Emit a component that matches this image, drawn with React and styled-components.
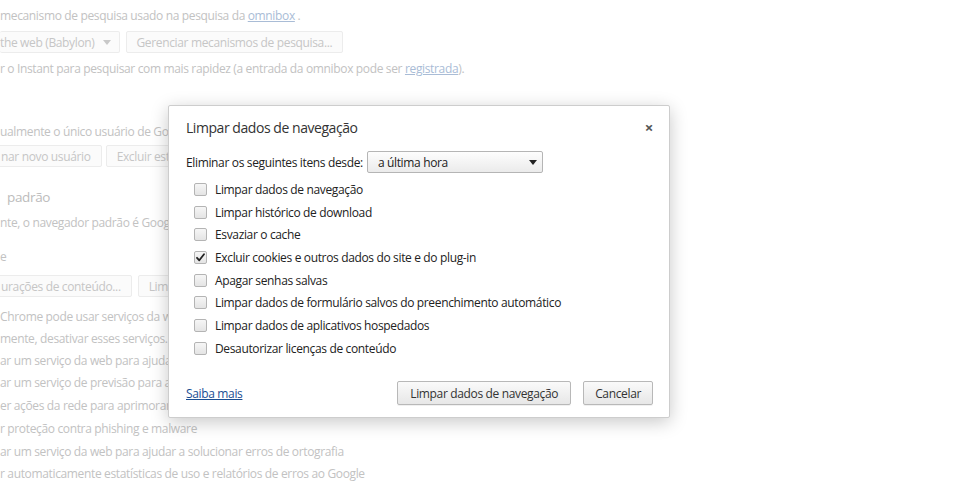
import React from "react";
import styled, { createGlobalStyle } from "styled-components";

const Global = createGlobalStyle`
  html, body { margin: 0; padding: 0; background: #fff; }
  body { font-family: "Open Sans", "Noto Sans", sans-serif; letter-spacing: -0.35px; }
`;

const Page = styled.div`
  position: relative;
  width: 956px;
  height: 500px;
  overflow: hidden;
  background: #fff;
`;

const Settings = styled.div`
  padding-top: 4px;
  color: #c2c2c2;
  font-size: 12px;
`;

const Line = styled.div`
  display: flex;
  align-items: center;
  gap: ${(p) => p.$gap ?? 6}px;
  height: 22px;
  margin-top: ${(p) => p.$mt || 0}px;
  padding-left: ${(p) => p.$pl || 0}px;
  white-space: nowrap;
`;

const Heading = styled(Line)`
  font-size: 13.5px;
  color: #bcbcbc;
`;

const FadedLink = styled.span`
  color: #a9bcd6;
  text-decoration: underline;
`;

const FadedButton = styled.div`
  height: 20px;
  display: flex;
  align-items: center;
  padding: 0 10px;
  border: 1px solid #ececec;
  border-radius: 2px;
  background: #fbfbfb;
  color: #c6c6c6;
  margin-left: ${(p) => p.$ml || 0}px;
`;

const FadedSelect = styled(FadedButton)`
  justify-content: space-between;
  padding: 0 8px 0 0;
  border-left: none;
  gap: 8px;
`;

const FadedArrow = styled.span`
  width: 0;
  height: 0;
  border-left: 4px solid transparent;
  border-right: 4px solid transparent;
  border-top: 5px solid #c8c8c8;
`;

const Dialog = styled.div`
  position: absolute;
  left: 168px;
  top: 105px;
  width: 502px;
  height: 313px;
  box-sizing: border-box;
  background: #fff;
  border: 1px solid #cdcdcd;
  border-radius: 2px;
  box-shadow: 0 4px 18px rgba(0, 0, 0, 0.22);
  display: flex;
  flex-direction: column;
  padding: 0 16px 0 17px;
  color: #222;
  font-size: 12px;
`;

const TitleBar = styled.div`
  display: flex;
  align-items: center;
  justify-content: space-between;
  height: 20px;
  margin-top: 11px;
`;

const Title = styled.div`
  font-size: 14px;
  letter-spacing: -0.45px;
  color: #333;
`;

const Close = styled.div`
  font-size: 15px;
  font-weight: 700;
  color: #555;
  line-height: 1;
`;

const RangeRow = styled.div`
  display: flex;
  align-items: center;
  gap: 4px;
  margin-top: 14px;
  height: 22px;
`;

const Select = styled.div`
  width: 176px;
  height: 22px;
  box-sizing: border-box;
  border: 1px solid #b5b5b5;
  border-radius: 2px;
  background: linear-gradient(#fdfdfd, #ebebeb);
  display: flex;
  align-items: center;
  justify-content: space-between;
  padding: 0 5px 0 10px;
  color: #222;
`;

const Arrow = styled.span`
  width: 0;
  height: 0;
  border-left: 4px solid transparent;
  border-right: 4px solid transparent;
  border-top: 5px solid #222;
`;

const List = styled.div`
  display: flex;
  flex-direction: column;
  margin-top: 5px;
  padding-left: 8px;
`;

const Item = styled.label`
  display: flex;
  align-items: center;
  gap: 8px;
  height: 22.7px;
  color: #222;
`;

const Box = styled.span`
  width: 13px;
  height: 13px;
  box-sizing: border-box;
  border: 1px solid #b4b4b4;
  border-radius: 2px;
  background: linear-gradient(#f6f6f6, #e4e4e4);
  display: flex;
  align-items: center;
  justify-content: center;
`;

const Footer = styled.div`
  display: flex;
  align-items: center;
  margin-top: auto;
  margin-bottom: 12px;
  height: 24px;
  gap: 12px;
`;

const Link = styled.a`
  color: #1a4e93;
  text-decoration: underline;
  margin-right: auto;
`;

const Button = styled.div`
  height: 24px;
  box-sizing: border-box;
  display: flex;
  align-items: center;
  padding: 0 ${(p) => p.$px || 10}px;
  border: 1px solid #b8b8b8;
  border-radius: 2px;
  background: linear-gradient(#fafafa, #e7e7e7);
  box-shadow: 0 1px 0 rgba(0, 0, 0, 0.06);
  color: #333;
`;

const items = [
  ["Limpar dados de navegação", false],
  ["Limpar histórico de download", false],
  ["Esvaziar o cache", false],
  ["Excluir cookies e outros dados do site e do plug-in", true],
  ["Apagar senhas salvas", false],
  ["Limpar dados de formulário salvos do preenchimento automático", false],
  ["Limpar dados de aplicativos hospedados", false],
  ["Desautorizar licenças de conteúdo", false],
];

const Check = () => (
  <svg width="11" height="11" viewBox="0 0 11 11">
    <path d="M2 5.8 L4.3 8.3 L9 2.3" fill="none" stroke="#222" strokeWidth="1.8" strokeLinecap="round" strokeLinejoin="round" />
  </svg>
);

export default function App() {
  return (
    <Page>
      <Global />
      <Settings>
        <Line>
          <span>
            mecanismo de pesquisa usado na pesquisa da <FadedLink>omnibox</FadedLink> .
          </span>
        </Line>
        <Line $mt={5}>
          <FadedSelect>
            <span>the web (Babylon)</span>
            <FadedArrow />
          </FadedSelect>
          <FadedButton>Gerenciar mecanismos de pesquisa...</FadedButton>
        </Line>
        <Line $mt={4}>
          <span>
            r o Instant para pesquisar com mais rapidez (a entrada da omnibox pode ser{" "}
            <FadedLink>registrada</FadedLink>).
          </span>
        </Line>
        <Line $mt={41}>ualmente o único usuário de Google Chrome.</Line>
        <Line $mt={3} $gap={4}>
          <FadedButton $ml={-10}>nar novo usuário</FadedButton>
          <FadedButton>Excluir este usuário</FadedButton>
        </Line>
        <Heading $mt={19} $pl={7}>padrão</Heading>
        <Line $mt={3}>nte, o navegador padrão é Google Chrome.</Line>
        <Line $mt={12}>e</Line>
        <Line $mt={8}>
          <FadedButton $ml={-10}>urações de conteúdo...</FadedButton>
          <FadedButton>Limpar dados de navegação...</FadedButton>
        </Line>
        <Line $mt={8}>Chrome pode usar serviços da web para melhorar sua experiência.</Line>
        <Line>mente, desativar esses serviços. Saiba mais</Line>
        <Line>ar um serviço da web para ajudar a resolver erros de navegação</Line>
        <Line>ar um serviço de previsão para ajudar a concluir pesquisas</Line>
        <Line $mt={1}>er ações da rede para aprimorar o desempenho</Line>
        <Line $mt={1}>r proteção contra phishing e malware</Line>
        <Line $mt={1}>ar um serviço da web para ajudar a solucionar erros de ortografia</Line>
        <Line>r automaticamente estatísticas de uso e relatórios de erros ao Google</Line>
      </Settings>

      <Dialog>
        <TitleBar>
          <Title>Limpar dados de navegação</Title>
          <Close>×</Close>
        </TitleBar>
        <RangeRow>
          <span>Eliminar os seguintes itens desde:</span>
          <Select>
            <span>a última hora</span>
            <Arrow />
          </Select>
        </RangeRow>
        <List>
          {items.map(([label, checked]) => (
            <Item key={label}>
              <Box>{checked && <Check />}</Box>
              <span>{label}</span>
            </Item>
          ))}
        </List>
        <Footer>
          <Link>Saiba mais</Link>
          <Button $px={12}>Limpar dados de navegação</Button>
          <Button $px={11}>Cancelar</Button>
        </Footer>
      </Dialog>
    </Page>
  );
}
